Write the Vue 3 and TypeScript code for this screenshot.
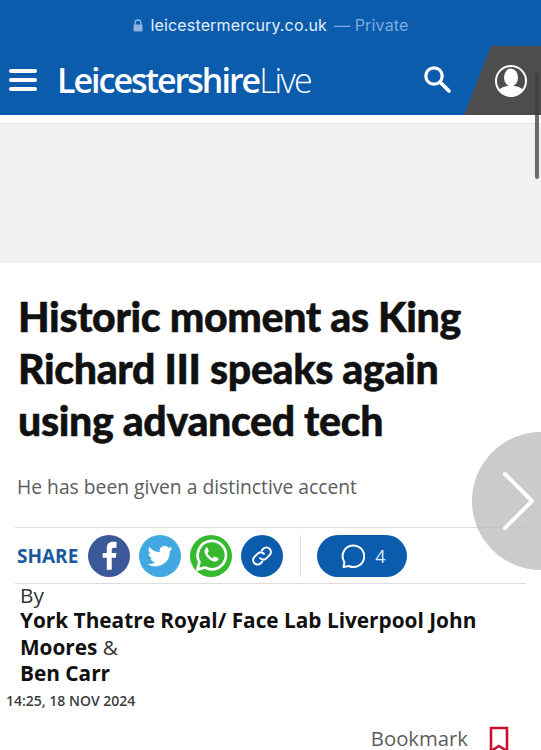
<script setup lang="ts">
const authors = 'York Theatre Royal/ Face Lab Liverpool John Moores'
</script>

<template>
  <div class="page">
    <header class="masthead">
      <div class="address">
        <svg class="lock" viewBox="0 0 10 13" width="10" height="13">
          <path d="M2.2 6V3.8a2.8 2.8 0 0 1 5.6 0V6" fill="none" stroke="#8fb4e0" stroke-width="1.3" />
          <rect x="0.5" y="5.5" width="9" height="7" rx="1" fill="#8fb4e0" />
        </svg>
        <span class="domain">leicestermercury.co.uk</span>
        <span class="private">— Private</span>
      </div>
      <nav class="nav">
        <span class="burger"><i></i><i></i><i></i></span>
        <span class="logo"><b>Leicestershire</b>Live</span>
        <svg class="search" viewBox="0 0 30 30" width="30" height="30">
          <circle cx="12" cy="12" r="8.2" fill="none" stroke="#fff" stroke-width="3.2" />
          <path d="M18 18l9 9" stroke="#fff" stroke-width="3.8" stroke-linecap="round" />
        </svg>
        <div class="account">
          <svg viewBox="0 0 36 36" width="36" height="36">
            <defs>
              <clipPath id="face"><circle cx="18" cy="18" r="15.5" /></clipPath>
            </defs>
            <circle cx="18" cy="18" r="16" fill="#fff" />
            <circle cx="18" cy="18" r="14" fill="#4d4d4d" />
            <g clip-path="url(#face)" fill="#fff">
              <ellipse cx="18" cy="14.5" rx="7" ry="9" />
              <path d="M2 36c0-9 7-12 12-13h8c5 1 12 4 12 13z" />
            </g>
          </svg>
        </div>
      </nav>
    </header>

    <div class="ad"></div>

    <article class="article">
      <h1>Historic moment as King Richard III speaks again using advanced tech</h1>
      <p class="lead">He has been given a distinctive accent</p>

      <div class="share">
        <span class="share-label">SHARE</span>
        <span class="round fb">
          <svg viewBox="0 0 40 40" width="42" height="42">
            <path d="M22.6 33V21.6h3.9l.6-4.500h-4.500v-2.700c0-1.300.4-2.200 2.200-2.200h2.400V6.700c-.4-.1-1.800-.2-3.500-.2-3.500 0-5.800 2.100-5.800 6v4.600h-3.900v4.500h3.900V33z" fill="#fff" />
          </svg>
        </span>
        <span class="round tw">
          <svg viewBox="0 0 24 24" width="30" height="30">
            <path d="M22 5.900c-.7.300-1.500.6-2.400.7.900-.5 1.500-1.300 1.800-2.300-.8.500-1.700.8-2.600 1a4.100 4.100 0 0 0-7 3.700C8.400 8.800 5.400 7.200 3.400 4.700c-1.100 1.900-.5 4.200 1.300 5.500-.7 0-1.300-.2-1.900-.5 0 2 1.400 3.700 3.300 4.100-.6.200-1.200.2-1.800.1.500 1.600 2 2.800 3.800 2.800A8.300 8.300 0 0 1 2 18.400a11.600 11.600 0 0 0 17.900-10.300c.8-.6 1.500-1.300 2.100-2.200z" fill="#fff" />
          </svg>
        </span>
        <span class="round wa">
          <svg viewBox="0 0 40 40" width="42" height="42">
            <path d="M7 33l2-7.200A13.500 13.500 0 1 1 14.200 31z" fill="none" stroke="#fff" stroke-width="2.600" stroke-linejoin="round" />
            <path d="M15.500 12.500c-1.200.8-2 2.400-1.500 4.200 1 3.700 4.800 7.500 8.800 8.600 1.800.4 3.400-.4 4.100-1.700.4-.7.300-1.300-.2-1.600l-2.700-1.400c-.5-.2-.9-.1-1.200.3l-1 1.200c-2.300-.8-4.200-2.700-5.200-5l1-1.100c.4-.4.400-.8.200-1.200l-1.200-2.700c-.3-.6-1.300-.7-1.900-.2z" fill="#fff" />
          </svg>
        </span>
        <span class="round link">
          <svg viewBox="0 0 24 24" width="26" height="26" fill="none" stroke="#fff" stroke-width="1.900" stroke-linecap="round">
            <path d="M10.200 14a4 4 0 0 0 5.800.2l3-3a4.100 4.100 0 0 0-5.800-5.800l-1.300 1.300" />
            <path d="M13.800 10a4 4 0 0 0-5.800-.2l-3 3a4.100 4.100 0 0 0 5.800 5.800l1.300-1.300" />
          </svg>
        </span>
        <span class="divider"></span>
        <span class="comments">
          <svg viewBox="0 0 26 26" width="26" height="26">
            <path d="M4.500 24l.9-4.800A10.800 10.800 0 1 1 9.800 23z" fill="none" stroke="#fff" stroke-width="2" stroke-linejoin="round" />
          </svg>
          <span>4</span>
        </span>
      </div>

      <div class="byline">
        <div class="by">By</div>
        <div class="names"><b>{{ authors }}</b> &amp;<br /><b>Ben Carr</b></div>
      </div>
      <time class="date">14:25, 18 NOV 2024</time>

      <div class="bookmark">
        <span>Bookmark</span>
        <svg viewBox="0 0 20 26" width="20" height="26">
          <path d="M2 25V2h16v23l-8-5z" fill="none" stroke="#c8102e" stroke-width="2.600" />
        </svg>
      </div>
    </article>

    <button class="next" type="button">
      <svg viewBox="0 0 36 60" width="36" height="60">
        <path d="M3 3l27 27L3 57" fill="none" stroke="#fff" stroke-width="4" stroke-linecap="round" stroke-linejoin="round" />
      </svg>
    </button>
    <div class="scrollbar"></div>
  </div>
</template>

<style>
html, body {
  margin: 0;
  background: #fff;
}
</style>

<style scoped>
.page {
  position: relative;
  width: 541px;
  height: 750px;
  overflow: hidden;
  font-family: "Open Sans", "Liberation Sans", sans-serif;
  color: #000;
  background: #fff;
}
.masthead {
  background: #0b5cad;
  color: #fff;
}
.address {
  display: flex;
  align-items: center;
  justify-content: center;
  gap: 7px;
  height: 46px;
  padding-top: 4px;
  box-sizing: border-box;
  font-family: Inter, "Liberation Sans", sans-serif;
  font-size: 16px;
  letter-spacing: 0.15px;
}
.lock {
  margin-right: 1px;
}
.domain {
  color: #e3eefa;
}
.private {
  color: #7fabe0;
}
.nav {
  display: flex;
  align-items: center;
  height: 69px;
  padding-left: 9px;
}
.burger {
  display: flex;
  flex-direction: column;
  gap: 5px;
  width: 28px;
  margin-top: -2px;
}
.burger i {
  display: block;
  height: 4px;
  border-radius: 2px;
  background: #fff;
}
.logo {
  margin-left: 20px;
  margin-top: -1px;
  font-family: "Open Sans", sans-serif;
  font-size: 34px;
  font-weight: 300;
  letter-spacing: -2px;
  white-space: nowrap;
}
.logo b {
  font-weight: 600;
}
.search {
  margin-left: auto;
  margin-right: 12px;
  margin-top: -4px;
}
.account {
  display: flex;
  align-items: center;
  justify-content: flex-end;
  width: 77px;
  height: 69px;
  padding-right: 12px;
  box-sizing: border-box;
  background: #4d4d4d;
  clip-path: polygon(27px 0, 100% 0, 100% 100%, 0 100%);
}
.ad {
  height: 140px;
  margin-top: 8px;
  background: #f1f1f1;
  border-top: 1px solid #e6e6e6;
  box-sizing: border-box;
}
.article {
  padding: 0 15px;
}
h1 {
  margin: 28px 0 0 3px;
  font-family: Lato, "Liberation Sans", sans-serif;
  font-size: 41px;
  font-weight: 900;
  line-height: 52px;
  letter-spacing: -0.35px;
  color: #111;
  -webkit-text-stroke: 0.5px #111;
}
.lead {
  margin: 27px 0 0 2px;
  font-size: 19.3px;
  line-height: 26px;
  color: #5c5c5c;
}
.share {
  display: flex;
  align-items: center;
  height: 57px;
  box-sizing: border-box;
  margin-top: 27px;
  border-top: 1px solid #dcdcdc;
  border-bottom: 1px solid #dcdcdc;
}
.share-label {
  margin-left: 2px;
  margin-right: 10px;
  font-size: 19px;
  font-weight: 700;
  color: #17599c;
}
.round {
  display: flex;
  align-items: center;
  justify-content: center;
  width: 42px;
  height: 42px;
  margin-right: 9px;
  border-radius: 50%;
}
.fb { background: #3b5998; }
.tw { background: #3fa9e0; }
.wa { background: #34b92f; }
.link { background: #0b5cad; }
.divider {
  width: 1px;
  height: 42px;
  margin: 0 16px 0 8px;
  background: #e2e2e2;
}
.comments {
  display: flex;
  align-items: center;
  justify-content: center;
  gap: 10px;
  width: 90px;
  height: 42px;
  border-radius: 21px;
  color: #dcebfa;
  background: #0b5cad;
  font-size: 18px;
}
.byline {
  margin-left: 5px;
  font-size: 20.8px;
  line-height: 26.5px;
  color: #333;
}
.by {
  height: 23px;
  line-height: 23px;
}
.names b {
  font-weight: 700;
  color: #111;
}
.date {
  display: block;
  margin: 4px 0 0 -9px;
  font-size: 14px;
  line-height: 20px;
  font-weight: 600;
  color: #3c3c3c;
}
.bookmark {
  display: flex;
  align-items: center;
  justify-content: flex-end;
  gap: 21px;
  height: 30px;
  margin-top: 12px;
  margin-right: 17px;
  font-size: 20.3px;
  color: #5c5c5c;
}
.bookmark svg {
  margin-top: 3px;
}
.next {
  position: absolute;
  left: 472px;
  top: 432px;
  width: 138px;
  height: 138px;
  padding: 0 0 0 30px;
  border: 0;
  border-radius: 50%;
  text-align: left;
  background: rgba(190, 190, 190, 0.8);
}
.next svg {
  display: block;
}
.scrollbar {
  position: absolute;
  right: 2px;
  top: 73px;
  width: 4px;
  height: 106px;
  border-radius: 2px;
  background: rgba(60, 60, 60, 0.75);
}
</style>
